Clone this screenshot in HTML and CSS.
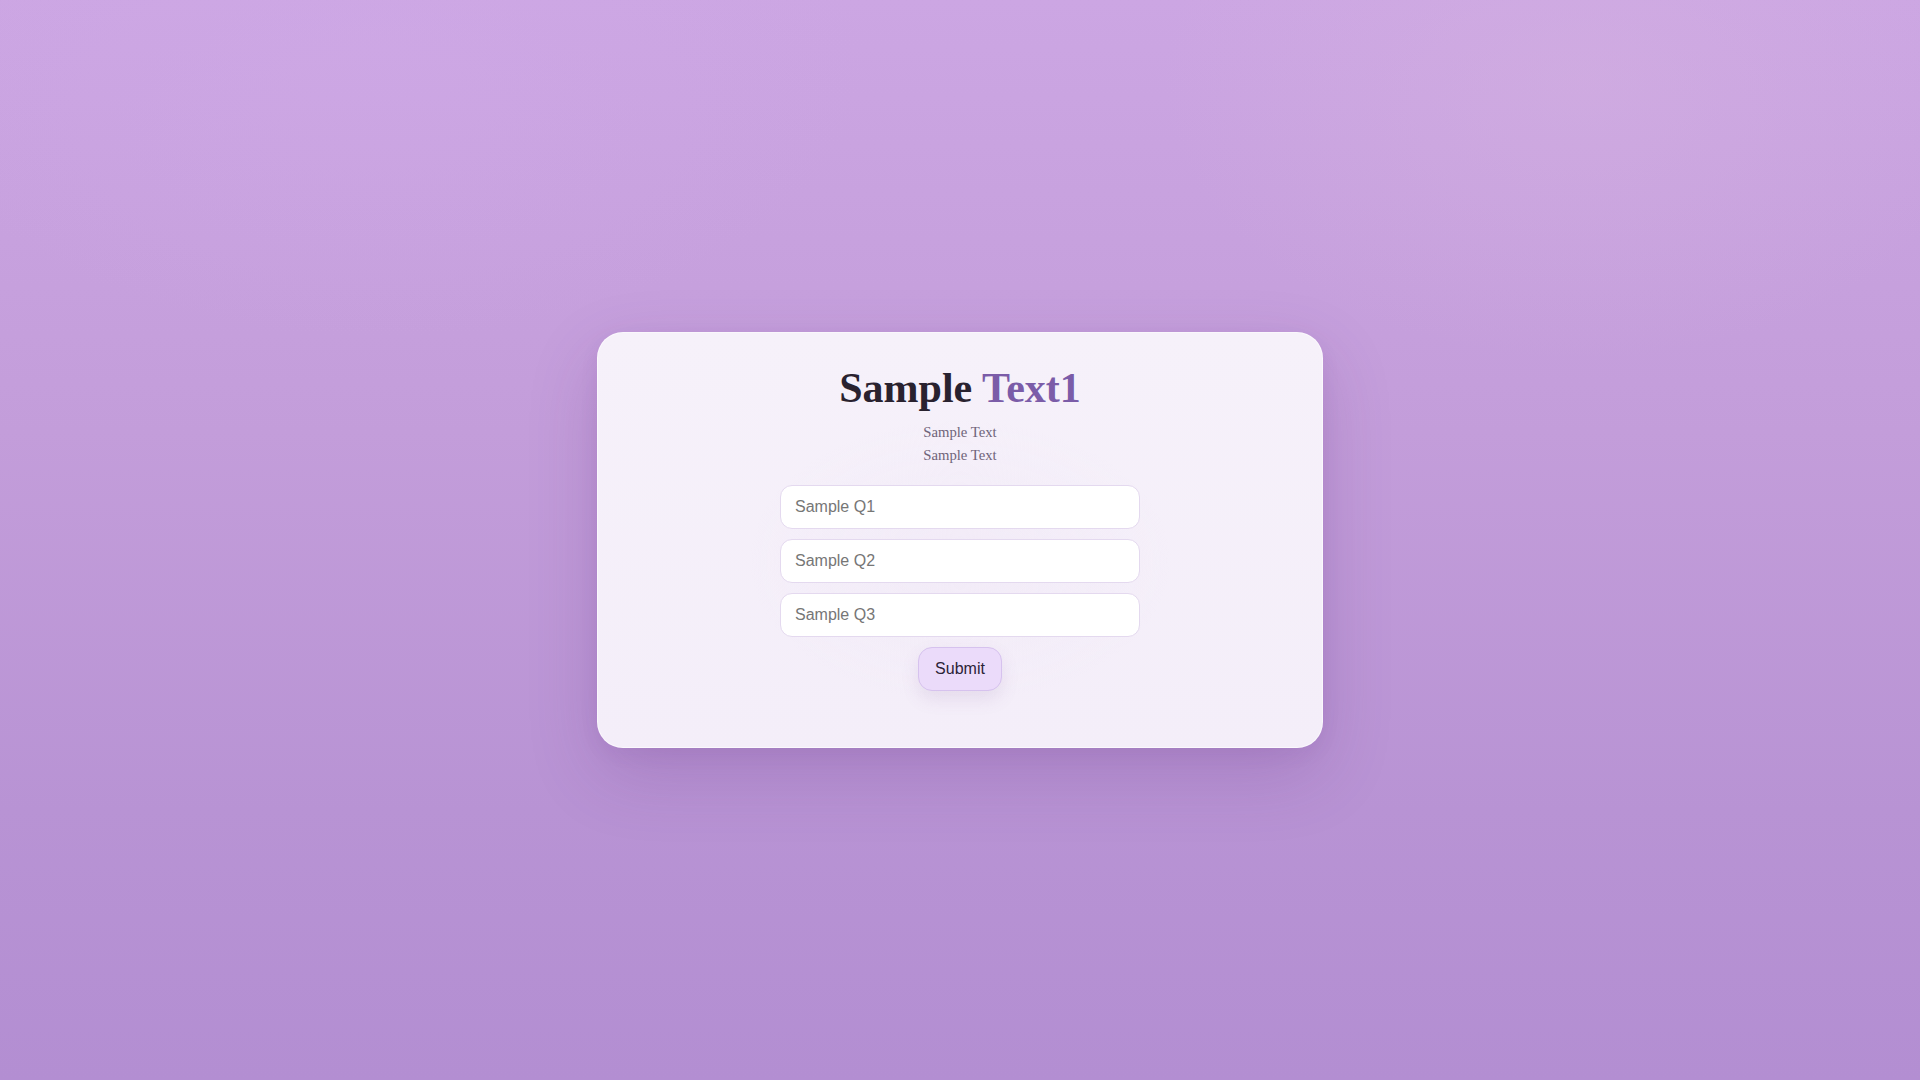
FILE: index.html
```html
<!DOCTYPE html>
<html lang="en">
<head>
<meta charset="utf-8">
<title>Sample</title>
<link rel="stylesheet" href="styles.css">
</head>
<body>
<main class="page">
  <section class="card">
    <h1 class="title">Sample <span class="accent">Text1</span></h1>
    <p class="subtitle">Sample Text<br>Sample Text</p>
    <form class="form">
      <input class="field" type="text" placeholder="Sample Q1">
      <input class="field" type="text" placeholder="Sample Q2">
      <input class="field" type="text" placeholder="Sample Q3">
      <button class="submit" type="button">Submit</button>
    </form>
  </section>
</main>
</body>
</html>
```
FILE: styles.css
```css
html, body {
  margin: 0;
  padding: 0;
}
body {
  min-height: 100vh;
  font-family: "Liberation Serif", "Times New Roman", serif;
  background:
    radial-gradient(ellipse 700px 400px at 380px 60px, rgba(208, 170, 232, 0.4), rgba(208, 170, 232, 0) 70%),
    radial-gradient(ellipse 600px 400px at 1580px 80px, rgba(214, 180, 224, 0.4), rgba(214, 180, 224, 0) 70%),
    linear-gradient(180deg, #cca6e3 0%, #c39dda 40%, #b893d4 75%, #b38ed2 100%);
}
.page {
  min-height: 100vh;
  display: flex;
  align-items: center;
  justify-content: center;
}
.card {
  box-sizing: border-box;
  width: 726px;
  padding: 31px 40px 56px;
  border: 1px solid rgba(255, 255, 255, 0.55);
  border-radius: 26px;
  background:
    radial-gradient(ellipse 300px 200px at 50% 55%, rgba(240, 232, 246, 0.6), rgba(240, 232, 246, 0) 70%),
    linear-gradient(180deg, #f6f1fa 0%, #f4eef9 100%);
  box-shadow: 0 26px 70px rgba(90, 40, 120, 0.2), 0 6px 20px rgba(90, 40, 120, 0.06);
  display: flex;
  flex-direction: column;
  align-items: center;
  text-align: center;
}
.title {
  margin: 0;
  font-size: 42px;
  line-height: 1.15;
  font-weight: 700;
  color: #29222f;
}
.accent {
  color: #7b5ca8;
}
.subtitle {
  margin: 8px 0 0;
  font-size: 14.7px;
  line-height: 23px;
  color: #6f6479;
}
.form {
  margin-top: 18px;
  display: flex;
  flex-direction: column;
  align-items: center;
  gap: 10px;
}
.field {
  box-sizing: border-box;
  width: 360px;
  height: 44px;
  padding: 0 14px;
  border: 1px solid #e4d9ef;
  border-radius: 12px;
  background: #ffffff;
  font-family: "Liberation Sans", Arial, sans-serif;
  font-size: 16px;
  color: #333;
  outline: none;
}
.field::placeholder {
  color: #767676;
}
.submit {
  box-sizing: border-box;
  height: 44px;
  padding: 0 16px;
  border: 1px solid #d6c2ee;
  border-radius: 14px;
  background: #ebdbfa;
  font-family: "Liberation Sans", Arial, sans-serif;
  font-size: 16px;
  color: #2c2337;
  box-shadow: 0 8px 18px rgba(120, 80, 150, 0.12);
  cursor: pointer;
}
```
